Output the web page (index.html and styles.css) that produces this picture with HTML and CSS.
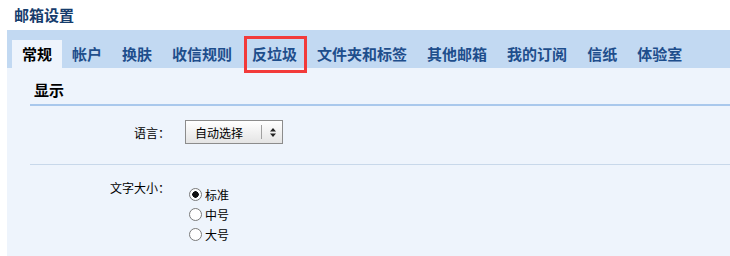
FILE: index.html
```html
<!DOCTYPE html>
<html>
	<head>
		<link rel="stylesheet" href="styles.css">
	</head>
	<body>
		<div class="page">
			<div class="title">邮箱设置</div>
			<div class="tabs">
				<span class="tab active">常规</span>
				<span class="tab">帐户</span>
				<span class="tab">换肤</span>
				<span class="tab">收信规则</span>
				<span class="tab marked">反垃圾<span class="mark"></span></span>
				<span class="tab">文件夹和标签</span>
				<span class="tab">其他邮箱</span>
				<span class="tab">我的订阅</span>
				<span class="tab">信纸</span>
				<span class="tab">体验室</span>
			</div>
			<div class="content">
				<div class="section-title">显示</div>
				<div class="row lang">
					<div class="label">语言：</div>
					<div class="field">
						<div class="select">
							<span class="select-text">自动选择</span>
							<span class="select-sep"></span>
							<svg class="select-arrow" viewBox="0 0 6 9" width="6" height="9">
								<path d="M0,3.5 L3,0 L6,3.5 Z M0,5.5 L6,5.5 L3,9 Z" fill="#222"/>
							</svg>
						</div>
					</div>
				</div>
				<div class="row size">
					<div class="label">文字大小：</div>
					<div class="field radios">
						<label class="radio"><input type="radio" name="size" checked>标准</label>
						<label class="radio"><input type="radio" name="size">中号</label>
						<label class="radio"><input type="radio" name="size">大号</label>
					</div>
				</div>
			</div>
		</div>
	</body>
</html>
```

FILE: styles.css
```css
body {
	margin: 0;
	background: white;
	font-family: "Noto Sans CJK SC", "Noto Sans", sans-serif;
	overflow: hidden;
}
.page {
	margin-left: 7px;
	height: 256px;
	display: flex;
	flex-direction: column;
}
.title {
	height: 30px;
	line-height: 30px;
	padding-left: 7px;
	font-size: 15px;
	font-weight: bold;
	color: #163c6c;
}
.tabs {
	display: flex;
	background: #c2d9f2;
	padding: 10px 0 0 5px;
	height: 28px;
}
.tab {
	padding: 0 10px;
	line-height: 28px;
	font-size: 15px;
	font-weight: bold;
	color: #1e4e8c;
	white-space: nowrap;
}
.tab.active {
	background: #eef4fc;
	color: black;
}
.marked {
	position: relative;
}
.mark {
	position: absolute;
	left: 2px;
	top: -4px;
	width: 57px;
	height: 31px;
	border: 3px solid #f23a3a;
}
.content {
	flex: 1;
	background: #eef4fc;
	padding-left: 23px;
}
.section-title {
	margin-top: 12px;
	padding-left: 4px;
	line-height: 20px;
	padding-bottom: 4px;
	border-bottom: 2px solid #a9c8ec;
	font-size: 15px;
	font-weight: bold;
	color: black;
}
.row {
	display: flex;
	font-size: 12px;
	color: black;
}
.label {
	width: 140px;
	text-align: right;
	margin-right: 15px;
}
.lang {
	align-items: center;
	padding: 14px 0 20px;
	border-bottom: 1px solid #c8d8ea;
}
.select {
	width: 96px;
	height: 22px;
	border: 1px solid #8c8c8c;
	background: linear-gradient(#ffffff, #e4e4e4);
	display: flex;
	align-items: center;
}
.select-text {
	padding-left: 9px;
	width: 66px;
}
.select-sep {
	width: 1px;
	height: 14px;
	background: #a0a0a0;
	margin-right: 8px;
}
.size {
	padding-top: 16px;
}
.size .label {
	line-height: 14px;
}
.radios {
	display: flex;
	flex-direction: column;
	margin-top: 3px;
}
.radio {
	display: flex;
	align-items: center;
	height: 20px;
}
.radio input {
	appearance: none;
	width: 13px;
	height: 13px;
	margin: 0 3px 0 4px;
	border: 1px solid #7a7a7a;
	border-radius: 50%;
	background: white;
	box-sizing: border-box;
}
.radio input:checked {
	background: radial-gradient(circle, #111 0, #111 3px, white 3.5px);
}
```
